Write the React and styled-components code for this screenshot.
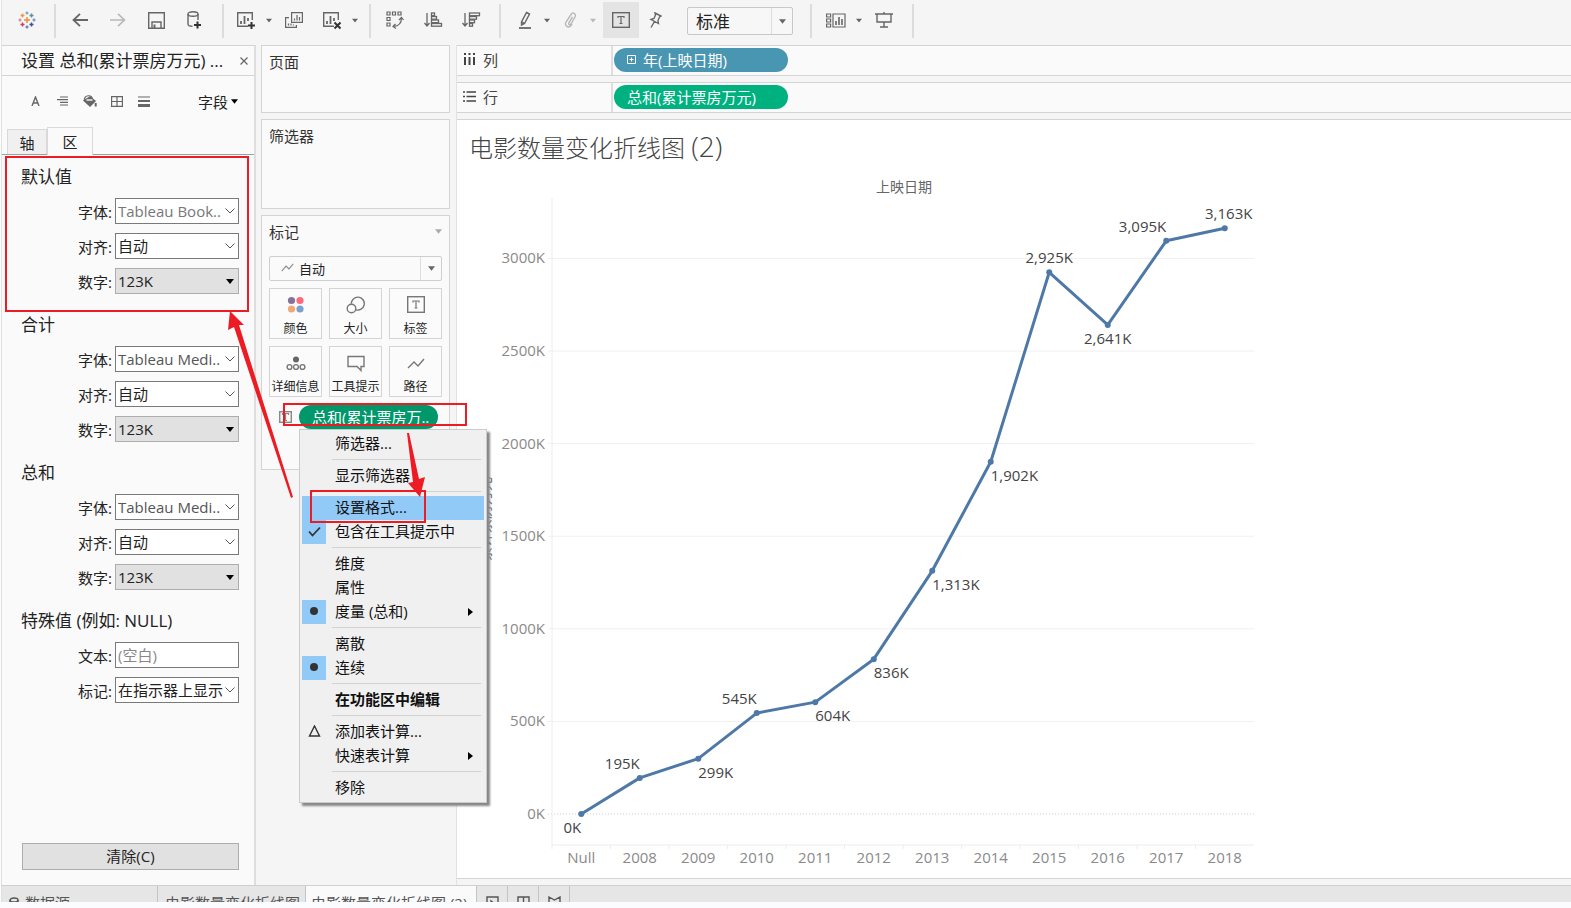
import React, {useState} from "react"
import styled, {createGlobalStyle, css} from 'styled-components'

const GlobalStyle = createGlobalStyle`
    * {
        box-sizing: border-box;
    }
    body {
        margin: 0;
        background: #fafcff;
        color: #222;
        font-family: "Open Sans", "Noto Sans CJK SC", sans-serif;
        font-size: 15px;
    }
    button, input, select {
        font: inherit;
        color: inherit;
    }
    h1, h2, h3, ul {
        margin: 0;
        padding: 0;
        font-weight: normal;
    }
    svg {
        display: block;
        flex: none;
    }
`
const Page = styled.div`
    position: relative;
    display: flex;
    flex-direction: column;
    min-height: 100vh;
    padding: 0 0 6px 1px;
    overflow: hidden;
`

/* toolbar */

const ToolbarContainer = styled.header`
    display: flex;
    height: 45px;
    padding-top: 4px;
    background: #f5f5f5;
    border-left: 1px solid #e4e4e4;
`
const ToolGroup = styled.div`
    display: flex;
    align-items: center;
    height: 34px;
    padding: 0 ${props => props.$right}px 0 ${props => props.$left}px;
    border-right: 2px solid #dcdcdc;
`
const ToolButton = styled.button`
    display: flex;
    align-items: center;
    justify-content: center;
    width: ${props => props.$width || 36}px;
    height: 36px;
    margin-top: -2px;
    margin-left: ${props => props.$apart ? 5 : 0}px;
    padding: 0;
    border: none;
    color: ${props => props.disabled ? "#b8b8b8" : "#666"};
    background: ${props => props.$active ? "#e4e4e4" : "transparent"};
`
const FitSelectBox = styled.div`
    position: relative;
    width: 106px;
    height: 28px;
    margin-left: 16px;
`
const FitSelect = styled.select`
    appearance: none;
    width: 100%;
    height: 100%;
    padding: 0 24px 0 8px;
    border: 1px solid #c8c8c8;
    border-radius: 2px;
    background: #f7f7f7;
    font-size: 17px;
`
const SelectMark = styled.span`
    position: absolute;
    top: 1px;
    right: 1px;
    bottom: 1px;
    display: flex;
    align-items: center;
    justify-content: center;
    width: ${props => props.$width}px;
    border-left: ${props => props.$divided ? "1px solid #dedede" : "none"};
    color: #555;
    pointer-events: none;
`

/* workspace */

const Workspace = styled.main`
    display: flex;
    flex: 1;
    min-height: 0;
    background: #f5f5f5;
    border-left: 1px solid #e0e0e0;
`
const FormatPane = styled.aside`
    display: flex;
    flex-direction: column;
    flex: none;
    width: 254px;
    background: #fafafa;
    border-top: 1px solid #d4d4d4;
    border-right: 2px solid #dedede;
`
const FormatHeader = styled.div`
    display: flex;
    align-items: center;
    justify-content: space-between;
    height: 30px;
    padding: 0 3px 0 19px;
    border-bottom: 1px solid #d4d4d4;
`
const FormatTitle = styled.h1`
    font-size: 17px;
    line-height: 28px;
    white-space: nowrap;
`
const CloseButton = styled.button`
    padding: 3px;
    border: none;
    background: none;
    color: #666;
`
const FormatTools = styled.div`
    display: flex;
    align-items: center;
    height: 52px;
    padding: 0 0 2px 20px;
`
const FormatTool = styled.button`
    display: flex;
    justify-content: center;
    width: 27px;
    padding: 0;
    border: none;
    background: none;
    color: #666;
`
const FieldsButton = styled.button`
    display: flex;
    align-items: center;
    gap: 3px;
    margin-left: 41px;
    padding: 0;
    border: none;
    background: none;
`
const TabList = styled.div`
    display: flex;
    align-items: flex-end;
    height: 27px;
    padding-left: 5px;
    border-bottom: 1px solid #a0a0a0;
`
const Tab = styled.button`
    height: ${props => props.$active ? 28 : 25}px;
    width: ${props => props.$active ? 46 : 40}px;
    margin-bottom: ${props => props.$active ? -1 : 0}px;
    padding: 0;
    border: 1px solid #d9d9d9;
    border-bottom: none;
    background: ${props => props.$active ? "#fafafa" : "#f0f0f0"};
`
const Section = styled.section`
    height: 148px;
    padding: 8px 15px 0 19px;
`
const SectionTitle = styled.h2`
    height: 35px;
    font-size: 17px;
    line-height: 28px;
`
const FieldRow = styled.div`
    display: flex;
    align-items: center;
    justify-content: flex-end;
    gap: 3px;
    margin-bottom: 9px;
`
const FieldBox = styled.div`
    position: relative;
    width: 124px;
    height: 26px;
`
const fieldStyle = css`
    display: block;
    width: 100%;
    height: 100%;
    padding: 0 0 0 2px;
    border: 1px solid #7a7a7a;
    border-radius: 0;
    background: #fff;
`
const FieldSelect = styled.select`
    ${fieldStyle}
    appearance: none;
    color: ${props => props.$color || "#222"};
    ${props => props.$filled && css`
        background: #e1e1e1;
        border-color: #adadad;
    `}
`
const FieldInput = styled.input`
    ${fieldStyle}
    &::placeholder {
        color: #888;
    }
`
const ClearButton = styled.button`
    height: 27px;
    margin: auto 15px 15px 20px;
    padding: 0 0 2px;
    border: 1px solid #adadad;
    background: #e1e1e1;
`

/* cards */

const CardColumn = styled.div`
    display: flex;
    flex-direction: column;
    flex: none;
    gap: 6px;
    width: 201px;
    padding: 0 6px 0 5px;
    border-right: 1px solid #e2e2e2;
`
const Card = styled.section`
    height: ${props => props.$height}px;
    padding: 5px 7px;
    border: 1px solid #d4d4d4;
    background: #fafafa;
`
const CardHeader = styled.div`
    display: flex;
    align-items: center;
    justify-content: space-between;
    height: 21px;
    color: #aaa;
`
const CardTitle = styled.h2`
    color: #333;
    font-size: 15px;
`
const MarkTypeBox = styled.div`
    position: relative;
    height: 25px;
    margin-top: 14px;
`
const MarkTypeSelect = styled.select`
    appearance: none;
    width: 100%;
    height: 100%;
    padding: 0 24px 0 29px;
    border: 1px solid #cfcfcf;
    border-radius: 2px;
    background: #fafafa;
    font-size: 13px;
`
const MarkTypeIcon = styled.span`
    position: absolute;
    top: 7px;
    left: 12px;
    color: #888;
    pointer-events: none;
`
const MarkGrid = styled.div`
    display: grid;
    grid-template-columns: repeat(3, 1fr);
    gap: 7px;
    margin-top: 7px;
`
const MarkButton = styled.button`
    display: flex;
    flex-direction: column;
    align-items: center;
    justify-content: space-between;
    height: 51px;
    padding: 7px 0 0;
    border: 1px solid #d4d4d4;
    background: #fbfbfb;
    color: #777;
`
const MarkLabel = styled.span`
    color: #222;
    font-size: 12px;
    line-height: 18px;
    white-space: nowrap;
`
const MarkPillRow = styled.div`
    position: relative;
    display: flex;
    align-items: center;
    gap: 7px;
    margin-top: 8px;
    padding-left: 10px;
    color: #888;
`
const Pill = styled.button`
    display: flex;
    align-items: center;
    gap: 7px;
    width: ${props => props.$width}px;
    height: 24px;
    padding: 0 0 2px 13px;
    border: none;
    border-radius: 12px;
    background: ${props => props.$color};
    color: #fff;
    white-space: nowrap;
`

/* context menu */

const Menu = styled.ul`
    position: absolute;
    z-index: 2;
    top: 24px;
    left: 30px;
    width: 188px;
    padding: 2px;
    border: 1px solid #ccc;
    background: #f0f0f0;
    box-shadow: 3px 3px 2px #888;
    list-style: none;
    color: #111;
`
const MenuItem = styled.button`
    display: flex;
    align-items: center;
    width: 100%;
    height: 24px;
    padding: 0 11px 0 0;
    border: none;
    background: ${props => props.$selected ? "#91c9f7" : "transparent"};
    font-weight: ${props => props.$bold ? "bold" : "normal"};
    text-align: left;
    white-space: nowrap;
`
const MenuMark = styled.span`
    display: flex;
    align-items: center;
    justify-content: center;
    width: 24px;
    height: 24px;
    margin-right: 9px;
    padding-bottom: 2px;
    background: ${props => props.$checked ? "#91c9f7" : "transparent"};
    color: #333;
`
const MenuText = styled.span`
    flex: 1;
    padding-bottom: 3px;
`
const MenuLine = styled.li`
    height: 1px;
    margin: 3px 3px 4px 30px;
    background: #d2d2d2;
`

/* shelves and sheet */

const SheetColumn = styled.div`
    display: flex;
    flex-direction: column;
    flex: 1;
    gap: 6px;
    min-width: 0;
    padding-bottom: 6px;
`
const Shelf = styled.div`
    display: flex;
    align-items: stretch;
    height: 31px;
    border: 1px solid #d4d4d4;
    border-width: 1px 0;
    background: #fafafa;
`
const ShelfName = styled.div`
    display: flex;
    align-items: center;
    gap: 6px;
    width: 156px;
    padding: 0 0 2px 6px;
    border-right: 2px solid #dedede;
    color: #444;
`
const ShelfDrop = styled.div`
    display: flex;
    align-items: center;
    padding: 0 0 1px 1px;
`
const Sheet = styled.section`
    display: flex;
    flex-direction: column;
    flex: 1;
    border-top: 1px solid #d4d4d4;
    border-bottom: 1px solid #d4d4d4;
    background: #fff;
`
const SheetTitle = styled.h2`
    height: 56px;
    padding-left: 12px;
    color: #444;
    font-size: 24px;
    font-weight: 300;
    line-height: 56px;
`
const SheetNumber = styled.span`
    font-size: 28px;
    line-height: 24px;
`
const ChartSvg = styled.svg`
    flex: 1;
    width: 100%;
    min-height: 702px;
    font-size: 15px;
`
const AxisText = styled.text`
    fill: #8a8a8a;
    font-size: 15px;
    text-anchor: ${props => props.$anchor || "middle"};
`
const AxisTitle = styled.text`
    fill: #666;
    font-size: 14px;
    text-anchor: middle;
`
const PointText = styled.text`
    fill: #444;
    font-size: 15px;
    text-anchor: ${props => props.$anchor};
`

/* sheet tabs */

const SheetTabs = styled.nav`
    display: flex;
    flex: none;
    height: 17px;
    overflow: hidden;
    border-top: 1px solid #cfcfcf;
    border-left: 1px solid #e0e0e0;
    background: #e6e6e6;
`
const SheetTab = styled.button`
    display: flex;
    align-items: center;
    flex: none;
    gap: 6px;
    width: ${props => props.$width}px;
    height: 33px;
    padding: 0 0 0 ${props => props.$left || 7}px;
    border: none;
    border-right: 1px solid #c4c4c4;
    background: ${props => props.$active ? "#fafafa" : "transparent"};
    color: #555;
    white-space: nowrap;
`

const Notes = styled.svg`
    position: absolute;
    z-index: 3;
    top: 0;
    left: 0;
    pointer-events: none;
`

const Icon = ({w = 18, h = w, children, ...rest}) => (
    <svg width={w} height={h} viewBox={`0 0 ${w} ${h}`} fill="none" stroke="currentColor" strokeWidth="1.4" aria-hidden="true" {...rest}>
        {children}
    </svg>
)

const Caret = ({size = 7, color = "#666"}) => (
    <svg width={size} height="5" viewBox="0 0 8 5" aria-hidden="true">
        <path d="M0 0h8L4 5z" fill={color}/>
    </svg>
)

const Chevron = () => <Icon w={10} h={6} strokeWidth="1"><path d="M.5.5 5 5 9.500 .5"/></Icon>

const TableauLogo = () => {
    const plus = (x, y, r, color) => <path key={`${x}-${y}`} d={`M${x - r} ${y}h${2 * r}M${x} ${y - r}v${2 * r}`} stroke={color}/>
    return (
        <Icon w={18} strokeWidth="1.5">
            {plus(9, 9, 3, "#eb8f3c")}
            {plus(4.5, 4.500, 2, "#eb9a4a")}
            {plus(13.5, 4.500, 2, "#5b8fa5")}
            {plus(4.5, 13.500, 2, "#d3405c")}
            {plus(13.5, 13.500, 2, "#35539b")}
            {plus(9, 2, 1.500, "#7da8b8")}
            {plus(9, 16, 1.500, "#6d7fb8")}
            {plus(2, 9, 1.500, "#d78a9a")}
            {plus(16, 9, 1.500, "#8090bb")}
        </Icon>
    )
}

const TextBoxIcon = ({w = 18, h = 16}) => (
    <Icon w={w} h={h}>
        <rect x=".7" y=".7" width={w - 1.4} height={h - 1.4}/>
        <path d={`M${w / 2 - 3} ${h / 2 - 2}v-1.500h6v1.500M${w / 2} ${h / 2 - 3.5}v7M${w / 2 - 1.5} ${h / 2 + 3.5}h3`} strokeWidth="1.200"/>
    </Icon>
)

const LineIcon = ({w = 18, h = 12}) => (
    <svg width={w} height={h} viewBox="0 0 18 12" fill="none" stroke="currentColor" strokeWidth="1.4" aria-hidden="true">
        <path d="M1 11 7 4l4 4 6-7"/>
    </svg>
)

const BarsIcon = ({mark}) => (
    <Icon w={20} h={19}>
        <path d="M12 15.300H1.700V1.700h14.600V9"/>
        <path d="M5 13v-3M8.500 13V5M12 10V7" strokeWidth="1.800"/>
        {mark === "plus"
            ? <path d="M15.500 11v7M12 14.500h7" stroke="#333" strokeWidth="2"/>
            : <path d="m12.500 11.500 6 6m0-6-6 6" stroke="#333" strokeWidth="2"/>}
    </Icon>
)

const SortIcon = ({descending}) => (
    <Icon w={19} h={16} strokeWidth="1.300">
        <path d="M3 1v13M.5 11 3 14l2.500-3"/>
        {(descending ? [10, 7, 5, 3] : [3, 5, 7, 10]).map((width, i) => (
            <rect key={i} x="7.500" y={1 + i * 3.500} width={width} height="2.700"/>
        ))}
    </Icon>
)

const CaretButton = ({label, disabled}) => (
    <ToolButton $width={10} aria-label={label} disabled={disabled}>
        <Caret size={6} color={disabled ? "#b8b8b8" : "#666"}/>
    </ToolButton>
)

const Toolbar = () => (
    <ToolbarContainer>
        <ToolGroup $left={7} $right={9}>
            <ToolButton aria-label="Tableau"><TableauLogo/></ToolButton>
        </ToolGroup>
        <ToolGroup $left={5} $right={9}>
            <ToolButton $width={38} aria-label="撤消">
                <Icon w={16} h={14} strokeWidth="1.800"><path d="M16 7H1.500M8 .8 1.500 7 8 13.200"/></Icon>
            </ToolButton>
            <ToolButton $width={38} aria-label="重做" disabled>
                <Icon w={16} h={14} strokeWidth="1.600"><path d="M0 7h14.500M8 .8 14.500 7 8 13.200"/></Icon>
            </ToolButton>
            <ToolButton $width={38} aria-label="保存">
                <Icon w={17} h={17}><path d="M.7.7h15.600v15.600H.7zM4 16v-6h9v6"/><path d="M6.500 12.500V16" strokeWidth="2"/></Icon>
            </ToolButton>
            <ToolButton $width={38} aria-label="新建数据源">
                <Icon w={15} h={18}>
                    <ellipse cx="6" cy="3" rx="5" ry="2.200"/>
                    <path d="M1 3v10c0 1.500 2 2.200 4.500 2.200M11 3v6"/>
                    <path d="M10.500 10.500v7M7 14h7" stroke="#333" strokeWidth="2"/>
                </Icon>
            </ToolButton>
        </ToolGroup>
        <ToolGroup $left={4} $right={9}>
            <ToolButton aria-label="新建工作表"><BarsIcon mark="plus"/></ToolButton>
            <CaretButton label="新建选项"/>
            <ToolButton $width={40} aria-label="复制">
                <Icon w={18} h={16} strokeWidth="1.200">
                    <path d="M6.600.6h10.800v9.800H6.600zM4 5.600H.6v9.800h10.800V13"/>
                    <path d="M9.500 8.500v-2M12 8.500V3M14.500 8.500V5M3.500 13.500v-2M6 13.500v-2M8.500 13.500v-1"/>
                </Icon>
            </ToolButton>
            <ToolButton aria-label="清除工作表"><BarsIcon/></ToolButton>
            <CaretButton label="清除选项"/>
        </ToolGroup>
        <ToolGroup $left={5} $right={9}>
            <ToolButton $width={38} aria-label="交换行和列">
                <Icon w={18} h={18} strokeWidth="1.200">
                    <path d="M1 1h3v3H1zM6.500 1h3v3h-3zM12 1h3v3h-3zM1 6.500h3v3H1zM1 12h3v3H1z"/>
                    <path d="M15.500 7c0 5-3 8-8 8.500M13 9l2.500-2.500L17.500 9M9.500 13 7 15.500l3 2"/>
                </Icon>
            </ToolButton>
            <ToolButton $width={38} aria-label="升序排序"><SortIcon/></ToolButton>
            <ToolButton $width={38} aria-label="降序排序"><SortIcon descending/></ToolButton>
        </ToolGroup>
        <ToolGroup $left={7} $right={17}>
            <ToolButton $width={34} aria-label="突出显示">
                <Icon w={14} h={18}>
                    <path d="M8.500 1.500 11.500 3 6.500 12.500 3.500 14 3.500 11zM3.500 11l3 1.500"/>
                    <path d="M1 17h12" strokeWidth="1.800"/>
                </Icon>
            </ToolButton>
            <CaretButton label="突出显示选项"/>
            <ToolButton aria-label="组成员" disabled>
                <Icon w={13} h={16}><path d="M8.500 5 5 10.500c-1 2 1 3 2 1.500l4-7c1.500-3-2-5.500-4-2.500L2 10c-2 4 2.500 6.500 5 3.500l1-1.500"/></Icon>
            </ToolButton>
            <CaretButton label="组选项" disabled/>
            <ToolButton $active $apart aria-label="显示标记标签"><TextBoxIcon/></ToolButton>
            <ToolButton $width={32} aria-label="固定轴">
                <Icon w={13} h={16}><path d="m6 1 6 3-1.500 1L9 8.500l.5 3L2 7.500l3-1L6.500 3zM5.500 9.500 2 15.500"/></Icon>
            </ToolButton>
            <FitSelectBox>
                <FitSelect aria-label="适合" defaultValue="标准">
                    <option>标准</option>
                    <option>整个视图</option>
                </FitSelect>
                <SelectMark $width={21} $divided><Caret/></SelectMark>
            </FitSelectBox>
        </ToolGroup>
        <ToolGroup $left={6} $right={8}>
            <ToolButton $width={36} aria-label="显示/隐藏卡">
                <Icon w={20} h={15} strokeWidth="1.200">
                    <path d="M.6 1h4v3h-4zM.6 6h4v3h-4zM.6 11h4v3h-4zM7 1h12v13H7z"/>
                    <path d="M10 12V8M13 12V4M16 12V6" strokeWidth="1.600"/>
                </Icon>
            </ToolButton>
            <CaretButton label="卡选项"/>
            <ToolButton $width={40} aria-label="演示模式">
                <Icon w={18} h={16}><path d="M0 2h18M2 2v8h14V2M9 10v5M5 15h8M9 0v2"/></Icon>
            </ToolButton>
        </ToolGroup>
    </ToolbarContainer>
)

const formatSections = [
    {id: "default", title: "默认值", font: "Tableau Book..", fontColor: "#777"},
    {id: "total", title: "合计", font: "Tableau Medi..", fontColor: "#555"},
    {id: "grand", title: "总和", font: "Tableau Medi..", fontColor: "#555"},
]

const SelectField = ({id, label, value, color, filled}) => (
    <FieldRow>
        <label htmlFor={id}>{label}:</label>
        <FieldBox>
            <FieldSelect id={id} defaultValue={value} $color={color} $filled={filled}>
                <option>{value}</option>
            </FieldSelect>
            <SelectMark $width={17}>{filled ? <Caret size={8} color="#000"/> : <Chevron/>}</SelectMark>
        </FieldBox>
    </FieldRow>
)

const FormatPanel = () => {

    const [activeTab, setActiveTab] = useState("区")

    return (
        <FormatPane>

            <FormatHeader>
                <FormatTitle>设置 总和(累计票房万元) ...</FormatTitle>
                <CloseButton aria-label="关闭">
                    <Icon w={8} strokeWidth="1.200"><path d="m.5.5 7 7m0-7-7 7"/></Icon>
                </CloseButton>
            </FormatHeader>

            <FormatTools>
                <FormatTool aria-label="字体">
                    <Icon w={9} h={10}><path d="M1 10 4.500 1 8 10M2.300 7h4.400"/></Icon>
                </FormatTool>
                <FormatTool aria-label="对齐">
                    <Icon w={11} h={10} strokeWidth="1.200"><path d="M3 1h8M0 3.600h11M3 6.300h8M3 9h8"/></Icon>
                </FormatTool>
                <FormatTool aria-label="阴影">
                    <Icon w={14} h={12}>
                        <path d="M1 5.500 7 2l5 4-5 5z" fill="currentColor"/>
                        <path d="M1.500 5C1-.5 9-.5 9.500 4" strokeWidth="1.200"/>
                        <path d="M3.500 5h6" stroke="#fafafa"/>
                        <path d="M12.700 8v3.500" strokeWidth="2"/>
                    </Icon>
                </FormatTool>
                <FormatTool aria-label="边界">
                    <Icon w={12} h={11} strokeWidth="1.200"><path d="M.6.6h10.800v9.800H.6zM6 .6v9.800M.6 5.500h10.800"/></Icon>
                </FormatTool>
                <FormatTool aria-label="线">
                    <Icon w={12} h={11}><path d="M0 1h12" strokeWidth="1"/><path d="M0 5h12" strokeWidth="2"/><path d="M0 9.500h12" strokeWidth="3"/></Icon>
                </FormatTool>
                <FieldsButton>字段<Caret color="#000"/></FieldsButton>
            </FormatTools>

            <TabList role="tablist">
                {["轴", "区"].map(name => (
                    <Tab key={name} role="tab" aria-selected={name === activeTab} $active={name === activeTab}
                         onClick={() => setActiveTab(name)}>{name}</Tab>
                ))}
            </TabList>

            {formatSections.map(({id, title, font, fontColor}) => (
                <Section key={id}>
                    <SectionTitle>{title}</SectionTitle>
                    <SelectField id={`${id}-font`} label="字体" value={font} color={fontColor}/>
                    <SelectField id={`${id}-align`} label="对齐" value="自动"/>
                    <SelectField id={`${id}-number`} label="数字" value="123K" filled/>
                </Section>
            ))}

            <Section>
                <SectionTitle>特殊值 (例如: NULL)</SectionTitle>
                <FieldRow>
                    <label htmlFor="null-text">文本:</label>
                    <FieldBox><FieldInput id="null-text" placeholder="(空白)"/></FieldBox>
                </FieldRow>
                <SelectField id="null-mark" label="标记" value="在指示器上显示"/>
            </Section>

            <ClearButton>清除(C)</ClearButton>

        </FormatPane>
    )
}

const CheckIcon = () => <Icon w={13} h={11} strokeWidth="1.800"><path d="M1 5.500 4.500 9.500 12 1.500"/></Icon>
const DotIcon = () => <Icon w={8}><circle cx="4" cy="4" r="4" fill="currentColor" stroke="none"/></Icon>
const DeltaIcon = () => <Icon w={13} h={12}><path d="M1.500 11 6.500 1l5 10z"/></Icon>

const menuItems = [
    {text: "筛选器..."},
    null,
    {text: "显示筛选器"},
    null,
    {text: "设置格式...", selected: true},
    {text: "包含在工具提示中", icon: <CheckIcon/>, checked: true},
    null,
    {text: "维度"},
    {text: "属性"},
    {text: "度量 (总和)", icon: <DotIcon/>, checked: true, submenu: true},
    null,
    {text: "离散"},
    {text: "连续", icon: <DotIcon/>, checked: true},
    null,
    {text: "在功能区中编辑", bold: true},
    null,
    {text: "添加表计算...", icon: <DeltaIcon/>},
    {text: "快速表计算", submenu: true},
    null,
    {text: "移除"},
]

const FieldMenu = () => (
    <Menu role="menu">
        {menuItems.map((item, i) => item === null
            ? <MenuLine key={i} role="separator"/>
            : (
                <li key={i} role="none">
                    <MenuItem role="menuitem" $selected={item.selected} $bold={item.bold}>
                        <MenuMark $checked={item.checked}>{item.icon}</MenuMark>
                        <MenuText>{item.text}</MenuText>
                        {item.submenu && <Icon w={5} h={8}><path d="M0 0v8l5-4z" fill="#000" stroke="none"/></Icon>}
                    </MenuItem>
                </li>
            ))}
    </Menu>
)

const markButtons = [
    {label: "颜色", icon: (
        <Icon w={18} stroke="none">
            <circle cx="4.500" cy="4.500" r="3.600" fill="#86719b"/>
            <circle cx="13" cy="4.500" r="3.600" fill="#fb6b7c"/>
            <circle cx="4.500" cy="13" r="3.600" fill="#f2a876"/>
            <circle cx="13" cy="13" r="3.600" fill="#7ca1cc"/>
        </Icon>
    )},
    {label: "大小", icon: <Icon w={19} h={18}><path d="M5.300 7.800a6.500 6.500 0 1 1 4.500 6"/><circle cx="5.500" cy="12.500" r="4.300"/></Icon>},
    {label: "标签", icon: <TextBoxIcon w={18} h={17}/>},
    {label: "详细信息", icon: (
        <Icon w={20} h={18}>
            <circle cx="10" cy="5.500" r="3" fill="#666" stroke="none"/>
            <circle cx="3.500" cy="13" r="2.400"/><circle cx="10" cy="13" r="2.400"/><circle cx="16.500" cy="13" r="2.400"/>
        </Icon>
    )},
    {label: "工具提示", icon: <Icon w={18} h={18}><path d="M1 2.500h16v10h-3v4l-4-4H1z"/></Icon>},
    {label: "路径", icon: <Icon w={18} h={18}><path d="m1 14 6-6 4 4 6-7"/></Icon>},
]

const Cards = () => (
    <CardColumn>
        <Card $height={68}>
            <CardHeader><CardTitle>页面</CardTitle></CardHeader>
        </Card>
        <Card $height={90}>
            <CardHeader><CardTitle>筛选器</CardTitle></CardHeader>
        </Card>
        <Card $height={255}>
            <CardHeader><CardTitle>标记</CardTitle><Caret color="#aaa"/></CardHeader>
            <MarkTypeBox>
                <MarkTypeSelect aria-label="标记类型" defaultValue="自动">
                    <option>自动</option>
                </MarkTypeSelect>
                <MarkTypeIcon><LineIcon w={13} h={9}/></MarkTypeIcon>
                <SelectMark $width={21} $divided><Caret/></SelectMark>
            </MarkTypeBox>
            <MarkGrid>
                {markButtons.map(({label, icon}) => (
                    <MarkButton key={label}>{icon}<MarkLabel>{label}</MarkLabel></MarkButton>
                ))}
            </MarkGrid>
            <MarkPillRow>
                <TextBoxIcon w={13} h={12}/>
                <Pill $width={139} $color="#00976a">总和(累计票房万..</Pill>
                <FieldMenu/>
            </MarkPillRow>
        </Card>
    </CardColumn>
)

const points = [
    {name: "Null", value: 0, side: "end", below: true},
    {name: "2008", value: 195, side: "end"},
    {name: "2009", value: 299, side: "start", below: true},
    {name: "2010", value: 545, side: "end"},
    {name: "2011", value: 604, side: "start", below: true},
    {name: "2012", value: 836, side: "start", below: true},
    {name: "2013", value: 1313, side: "start", below: true},
    {name: "2014", value: 1902, side: "start", below: true},
    {name: "2015", value: 2925, side: "middle"},
    {name: "2016", value: 2641, side: "middle", below: true},
    {name: "2017", value: 3095, side: "end"},
    {name: "2018", value: 3163, side: "middle"},
]

const plot = {left: 95, right: 797, top: 22, zero: 638, bottom: 669}
const step = (plot.right - plot.left) / points.length
const xAt = i => plot.left + step * (i + 0.5)
const yAt = value => plot.zero - value * 0.1852
// the last label is nudged over its point, the others hang on it
const labelX = (point, i) => xAt(i) + (point.name === "2018" ? 4 : 0)

const Chart = () => (
    <ChartSvg role="img" aria-label="电影数量变化折线图">
        <AxisTitle x={(plot.left + plot.right) / 2 + 1} y="16">上映日期</AxisTitle>
        <AxisTitle transform="translate(33 343) rotate(-90)">累计票房万元</AxisTitle>

        {[0, 500, 1000, 1500, 2000, 2500, 3000].map(value => (
            <g key={value}>
                <line x1={plot.left - 4} x2={plot.right} y1={yAt(value)} y2={yAt(value)}
                      stroke={value ? "#f0f0f0" : "#d0d0d0"} strokeDasharray={value ? undefined : "1 2"}/>
                <AxisText $anchor="end" x={plot.left - 7} y={yAt(value) + 5}>{value}K</AxisText>
            </g>
        ))}

        <path d={`M${plot.left} ${plot.top}V${plot.bottom}H${plot.right}`} fill="none" stroke="#ececec"/>

        {points.map((point, i) => (
            <g key={point.name}>
                <line x1={plot.left + step * i} x2={plot.left + step * i} y1={plot.bottom} y2={plot.bottom + 4} stroke="#ececec"/>
                <AxisText x={xAt(i)} y={plot.bottom + 18}>{point.name}</AxisText>
            </g>
        ))}

        <polyline points={points.map((point, i) => `${xAt(i)},${yAt(point.value)}`).join(" ")}
                  fill="none" stroke="#4e79a7" strokeWidth="3" strokeLinejoin="round"/>

        {points.map((point, i) => (
            <g key={point.name}>
                <circle cx={xAt(i)} cy={yAt(point.value)} r="3" fill="#4e79a7"/>
                <PointText $anchor={point.side} x={labelX(point, i)} y={yAt(point.value) + (point.below ? 19 : -9)}>
                    {point.value.toLocaleString("en-US")}K
                </PointText>
            </g>
        ))}
    </ChartSvg>
)

const SheetArea = () => (
    <SheetColumn>
        <Shelf>
            <ShelfName>
                <Icon w={14} h={13} strokeWidth="2"><path d="M2 4v8M6.500 4v8M11 4v8M2 0v2M6.500 0v2M11 0v2"/></Icon>
                列
            </ShelfName>
            <ShelfDrop>
                <Pill $width={174} $color="#4996b2">
                    <Icon w={9} strokeWidth="1"><path d="M.5.5h8v8h-8zM4.500 2.500v4M2.500 4.500h4"/></Icon>
                    年(上映日期)
                </Pill>
            </ShelfDrop>
        </Shelf>
        <Shelf>
            <ShelfName>
                <Icon w={14} h={11} strokeWidth="1.500"><path d="M3.500 1H13M3.500 5.500H13M3.500 10H13M0 1h2M0 5.500h2M0 10h2"/></Icon>
                行
            </ShelfName>
            <ShelfDrop>
                <Pill $width={174} $color="#00b180">总和(累计票房万元)</Pill>
            </ShelfDrop>
        </Shelf>
        <Sheet>
            <SheetTitle>电影数量变化折线图 <SheetNumber>(2)</SheetNumber></SheetTitle>
            <Chart/>
        </Sheet>
    </SheetColumn>
)

const SheetTabBar = () => (
    <SheetTabs>
        <SheetTab $width={156}>
            <Icon w={10} h={12}><ellipse cx="5" cy="3" rx="4" ry="2"/><path d="M1 3v6c0 3 8 3 8 0V3"/></Icon>
            数据源
        </SheetTab>
        <SheetTab $width={148}>电影数量变化折线图</SheetTab>
        <SheetTab $width={171} $left={5} $active>电影数量变化折线图 (2)</SheetTab>
        <SheetTab $width={31} $left={9} aria-label="新建工作表">
            <Icon w={13} h={14}><path d="M1 1h11v12H1z"/><path d="M5 8V5l4 3"/></Icon>
        </SheetTab>
        <SheetTab $width={31} $left={9} aria-label="新建仪表板">
            <Icon w={13} h={14}><path d="M1 1h11v12H1zM6.500 1v12M1 7h11"/></Icon>
        </SheetTab>
        <SheetTab $width={31} $left={9} aria-label="新建故事">
            <Icon w={13} h={14}><path d="M1 1 6.500 4 12 1v11l-5.500 2L1 12z"/></Icon>
        </SheetTab>
    </SheetTabs>
)

const Annotations = () => (
    <Notes width="480" height="530" fill="none" stroke="#ed1c24" strokeWidth="2" aria-hidden="true">
        <rect x="6" y="157" width="242" height="154"/>
        <rect x="284" y="404" width="182" height="21"/>
        <rect x="311" y="491" width="114" height="31"/>
        <g fill="#ed1c24" stroke="none">
            <path d="M230 311 244 325l-5 0L293 497l-2 1L234 327l-6 3z"/>
            <path d="M407 433h2l10 46 6-2-5 20-12-14 5-1z"/>
        </g>
    </Notes>
)

const App = () => (
    <Page>
        <GlobalStyle/>
        <Toolbar/>
        <Workspace>
            <FormatPanel/>
            <Cards/>
            <SheetArea/>
        </Workspace>
        <SheetTabBar/>
        <Annotations/>
    </Page>
)

export default App
